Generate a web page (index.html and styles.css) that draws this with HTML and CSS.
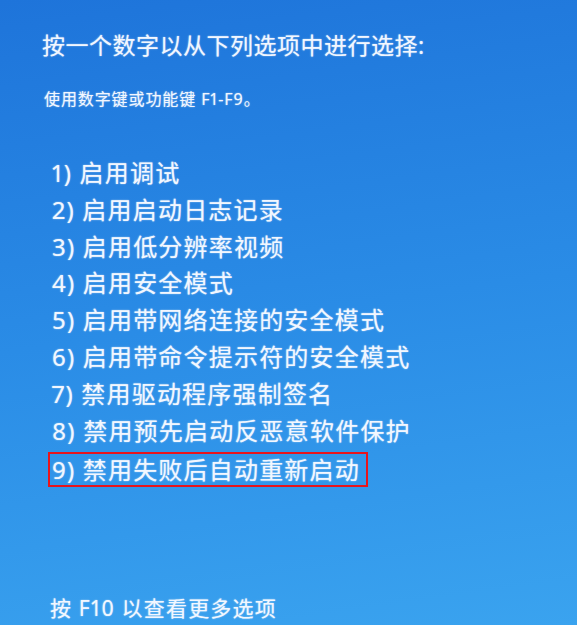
FILE: index.html
```html
<!DOCTYPE html>
<html lang="zh-CN">
<head>
<meta charset="utf-8">
<title>启动设置</title>
<link rel="stylesheet" href="styles.css">
</head>
<body>
<main class="screen">
  <h1 class="title">按一个数字以从下列选项中进行选择:</h1>
  <p class="hint">使用数字键或功能键 F1-F9。</p>
  <ol class="options">
    <li>1) 启用调试</li>
    <li>2) 启用启动日志记录</li>
    <li>3) 启用低分辨率视频</li>
    <li>4) 启用安全模式</li>
    <li>5) 启用带网络连接的安全模式</li>
    <li>6) 启用带命令提示符的安全模式</li>
    <li>7) 禁用驱动程序强制签名</li>
    <li>8) 禁用预先启动反恶意软件保护</li>
    <li><span class="marked">9) 禁用失败后自动重新启动</span></li>
  </ol>
  <p class="more">按 F10 以查看更多选项</p>
</main>
</body>
</html>
```

FILE: styles.css
```css
html, body {
  margin: 0;
  padding: 0;
  height: 100%;
}

body {
  background: linear-gradient(172deg, #1e74da 0%, #2a8ce6 50%, #3aa3ef 100%);
  color: #f2f7ff;
  font-family: "Noto Sans", "Noto Sans CJK SC", sans-serif;
  font-variant-numeric: proportional-nums;
  overflow: hidden;
}

.screen {
  padding: 30px 0 0 0;
  text-shadow: 0 0 1.5px rgba(255, 255, 255, 0.7);
}

.title {
  margin: 0 0 0 42px;
  font-size: 23px;
  font-weight: 400;
  line-height: 30px;
  letter-spacing: 0.5px;
}

.hint {
  margin: 27px 0 0 44px;
  font-size: 16px;
  line-height: 24px;
  letter-spacing: 0.9px;
}

.options {
  list-style: none;
  margin: 44px 0 0 0;
  padding: 0 0 0 52px;
  font-size: 24px;
  letter-spacing: 1.2px;
}

.options li {
  line-height: 36.8px;
  height: 36.8px;
}

.marked {
  display: inline-block;
  box-sizing: border-box;
  width: 320px;
  height: 35px;
  margin-left: -4px;
  padding-left: 2px;
  border: 2px solid #e8141c;
  line-height: 31px;
  vertical-align: middle;
}

.more {
  margin: 110px 0 0 50px;
  font-size: 21px;
  line-height: 24px;
  letter-spacing: 1.2px;
}
```
